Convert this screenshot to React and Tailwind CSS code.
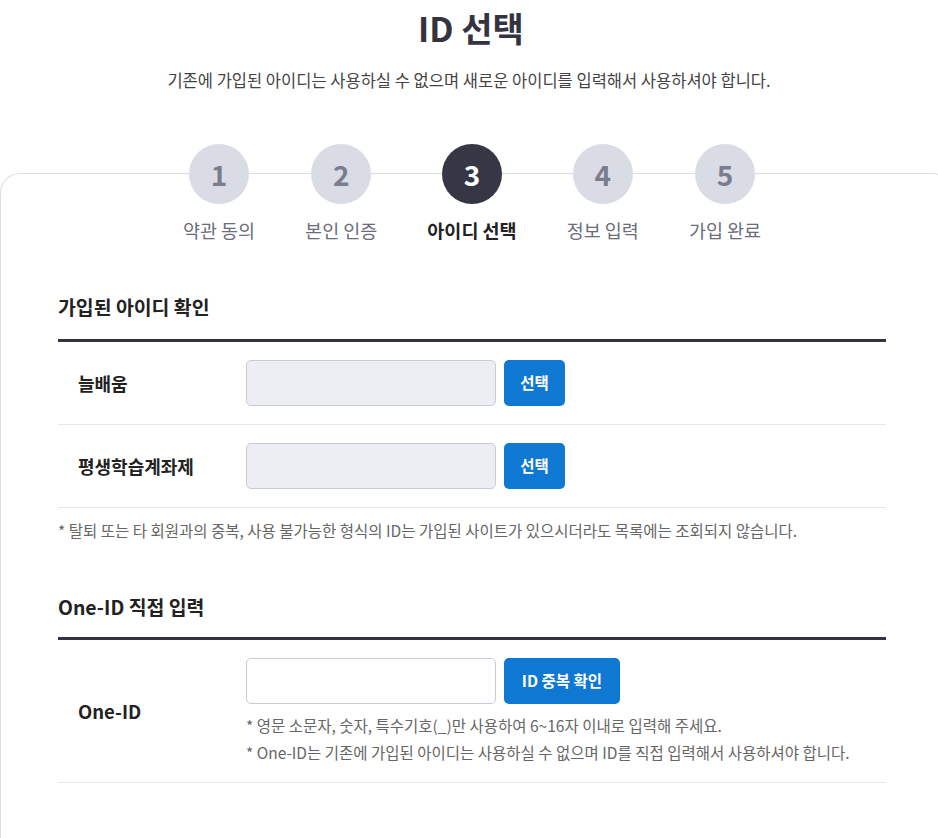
import React from 'react';

const steps = [
  { no: 1, label: '약관 동의' },
  { no: 2, label: '본인 인증' },
  { no: 3, label: '아이디 선택', active: true },
  { no: 4, label: '정보 입력' },
  { no: 5, label: '가입 완료' },
];

const font = { fontFamily: '"Noto Sans CJK KR", "Noto Sans", sans-serif' };

const StepBar = () => (
  <div className="flex justify-center gap-[50px] -mt-[30px] pr-[8px]">
    {steps.map((s) => (
      <div key={s.no} className="flex flex-col items-center">
        <div
          className={`w-[60px] h-[60px] rounded-full flex items-center justify-center text-[28px] font-bold ${
            s.active ? 'bg-[#353744] text-white' : 'bg-[#dadce5] text-[#7a7d8e]'
          }`}
        >
          {s.no}
        </div>
        <div
          className={`mt-[13px] text-[18.5px] leading-[26px] whitespace-nowrap ${
            s.active ? 'font-bold text-[#222]' : 'text-[#6b6d7a]'
          }`}
        >
          {s.label}
        </div>
      </div>
    ))}
  </div>
);

const SelectRow = ({ label }) => (
  <div className="flex items-center h-[83px] border-b border-[#e5e6eb]">
    <div className="w-[188px] pl-[20px] text-[18px] font-bold text-[#222]">{label}</div>
    <div className="w-[250px] h-[46px] rounded-[5px] bg-[#eceef3] border border-[#c9ccd6]" />
    <button className="ml-[8px] w-[61px] h-[46px] rounded-[5px] bg-[#0f78d2] text-white text-[15.5px] font-bold">
      선택
    </button>
  </div>
);

export default function App() {
  return (
    <div className="min-h-screen bg-white overflow-x-hidden text-[#333]" style={font}>
      <div className="text-center pt-[4px]">
        <h1 className="text-[34px] leading-[48px] font-bold text-[#33343f] pl-[4px]">ID 선택</h1>
        <p className="mt-[16px] text-[16.5px] leading-[24px] text-[#444]">
          기존에 가입된 아이디는 사용하실 수 없으며 새로운 아이디를 입력해서 사용하셔야 합니다.
        </p>
      </div>

      <div className="mt-[81px] w-[952px] rounded-t-[20px] border-t border-l border-r border-[#dcdde3] pb-[56px]">
        <StepBar />

        <div className="ml-[57px] w-[828px]">
          <h2 className="mt-[50px] text-[19.4px] leading-[28px] font-bold text-[#222]">가입된 아이디 확인</h2>
          <div className="mt-[18px] border-t-[3px] border-[#33343f]">
            <SelectRow label="늘배움" />
            <SelectRow label="평생학습계좌제" />
          </div>
          <p className="mt-[11px] text-[15.5px] leading-[22px] text-[#666] whitespace-nowrap">
            * 탈퇴 또는 타 회원과의 중복, 사용 불가능한 형식의 ID는 가입된 사이트가 있으시더라도 목록에는 조회되지 않습니다.
          </p>

          <h2 className="mt-[52px] text-[19.4px] leading-[28px] font-bold text-[#222]">One-ID 직접 입력</h2>
          <div className="mt-[16px] border-t-[3px] border-[#33343f]">
            <div className="flex items-center border-b border-[#e5e6eb] pt-[18px] pb-[16px]">
              <div className="w-[188px] pl-[20px] text-[18.5px] font-bold text-[#222]">One-ID</div>
              <div>
                <div className="flex">
                  <input className="w-[250px] h-[46px] rounded-[5px] bg-white border border-[#c9ccd6] outline-none px-3" />
                  <button className="ml-[8px] w-[116px] h-[46px] rounded-[5px] bg-[#0f78d2] text-white text-[15.5px] font-bold">
                    ID 중복 확인
                  </button>
                </div>
                <p className="mt-[8px] text-[15.5px] leading-[27px] text-[#666] whitespace-nowrap">
                  * 영문 소문자, 숫자, 특수기호(_)만 사용하여 6~16자 이내로 입력해 주세요.
                </p>
                <p className="text-[15.5px] leading-[27px] text-[#666] whitespace-nowrap">
                  * One-ID는 기존에 가입된 아이디는 사용하실 수 없으며 ID를 직접 입력해서 사용하셔야 합니다.
                </p>
              </div>
            </div>
          </div>
        </div>
      </div>
    </div>
  );
}
